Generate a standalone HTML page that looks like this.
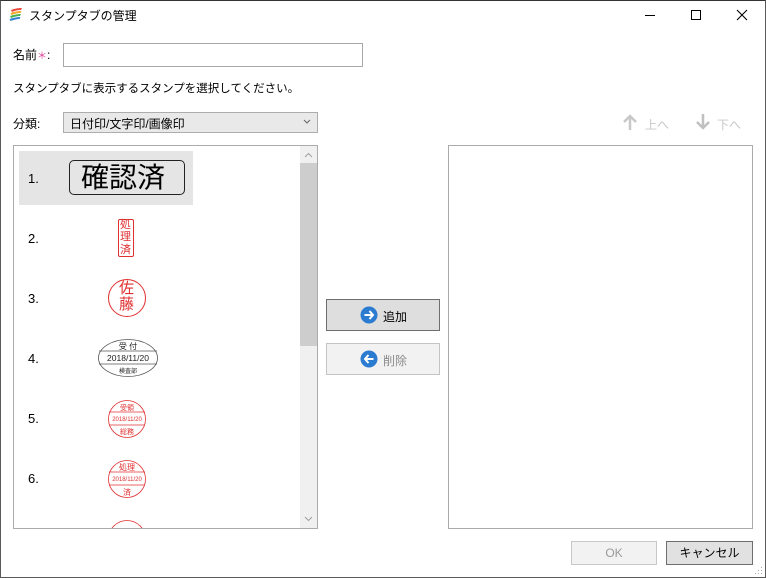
<!DOCTYPE html>
<html><head><meta charset="utf-8"><style>
*{margin:0;padding:0;box-sizing:border-box}
body{width:766px;height:578px;overflow:hidden;background:#fff;font-family:"Liberation Sans","Noto Sans CJK JP",sans-serif;font-size:12px;color:#000;position:relative}
.a{position:absolute}
.win{position:absolute;left:0;top:0;width:766px;height:578px;border:1px solid #5a5a5a;border-top-color:#333}
.t{white-space:nowrap}
</style></head><body>
<div class="win"></div>
<svg class="a" style="left:8px;top:7px" width="16" height="16" viewBox="0 0 16 16">
<path d="M3 3 Q8 1 14 1 L13 3 Q8 3 4 5Z" fill="#e8463a"/>
<path d="M2.5 6 Q8 4 13.5 4 L12.5 6 Q8 6 3.5 8Z" fill="#f5a623"/>
<path d="M2 9 Q8 7 13 7 L12 9 Q8 9 3 11Z" fill="#4caf50"/>
<path d="M1.5 12 Q8 10 12.5 10 L11.5 12 Q8 12 2.5 14Z" fill="#2f7fd3"/>
</svg>
<div class="a t" style="left:29px;top:7px;font-size:12px">スタンプタブの管理</div>
<div class="a" style="left:645px;top:15px;width:10px;height:1px;background:#000"></div>
<div class="a" style="left:691px;top:10px;width:10px;height:10px;border:1px solid #000"></div>
<svg class="a" style="left:736px;top:9px" width="12" height="12"><path d="M1 1L11 11M11 1L1 11" stroke="#000" stroke-width="1.1"/></svg>

<div class="a t" style="left:13px;top:46px">名前<span style="color:#e0409a;font-size:10px">＊</span>:</div>
<div class="a" style="left:63px;top:43px;width:300px;height:24px;border:1px solid #a8a8a8"></div>
<div class="a t" style="left:13px;top:80px;font-size:11.5px">スタンプタブに表示するスタンプを選択してください。</div>
<div class="a t" style="left:13px;top:115px">分類:</div>
<div class="a" style="left:63px;top:112px;width:255px;height:21px;border:1px solid #adadad;background:#e9e9e9"></div>
<div class="a t" style="left:70px;top:115px">日付印/文字印/画像印</div>
<svg class="a" style="left:303px;top:119px" width="8" height="6"><path d="M1 1L4 4L7 1" stroke="#666" fill="none"/></svg>

<svg class="a" style="left:622px;top:114px" width="16" height="17"><path d="M8 2V16M2 8L8 2L14 8" stroke="#c8c8c8" stroke-width="2.5" fill="none"/></svg>
<div class="a t" style="left:645px;top:116px;color:#c8c8c8">上へ</div>
<svg class="a" style="left:695px;top:113px" width="16" height="17"><path d="M8 1V15M2 9L8 15L14 9" stroke="#c0c0c0" stroke-width="2.5" fill="none"/></svg>
<div class="a t" style="left:717px;top:116px;color:#c8c8c8">下へ</div>

<!-- left list -->
<div class="a" style="left:13px;top:145px;width:305px;height:384px;border:1px solid #ababab;overflow:hidden">
  <div class="a" style="left:286px;top:0;width:17px;height:382px;background:#f0f0f0"></div>
  <svg class="a" style="left:290px;top:6px" width="9" height="6"><path d="M1 5L4.5 1.5L8 5" stroke="#a0a0a0" fill="none"/></svg>
  <svg class="a" style="left:290px;top:370px" width="9" height="6"><path d="M1 1L4.5 4.5L8 1" stroke="#a0a0a0" fill="none"/></svg>
  <div class="a" style="left:286px;top:17px;width:17px;height:183px;background:#cdcdcd"></div>
  <div class="a" style="left:5px;top:5px;width:174px;height:54px;background:#e5e5e5"></div>
</div>
<div class="a t" style="left:28px;top:171px;font-size:13px">1.</div>
<div class="a t" style="left:28px;top:231px;font-size:13px">2.</div>
<div class="a t" style="left:28px;top:291px;font-size:13px">3.</div>
<div class="a t" style="left:28px;top:351px;font-size:13px">4.</div>
<div class="a t" style="left:28px;top:411px;font-size:13px">5.</div>
<div class="a t" style="left:28px;top:471px;font-size:13px">6.</div>
<div class="a" style="left:69px;top:160px;width:116px;height:35px;border:1px solid #222;border-radius:5px"></div>
<div class="a t" style="left:81px;top:160px;font-size:28px;line-height:36px">確認済</div>
<div class="a" style="left:118px;top:219px;width:16px;height:38px;border:1px solid #e03030;border-radius:2px"></div>
<div class="a" style="left:120px;top:219px;width:12px;font-size:11px;line-height:12.3px;color:#e03030">処理済</div>
<div class="a" style="left:108px;top:279px;width:38px;height:38px;border:1px solid #e03030;border-radius:50%"></div>
<div class="a" style="left:119px;top:281px;width:16px;font-size:15px;line-height:16px;color:#e03030">佐藤</div>
<svg class="a" style="left:97px;top:338px" width="62" height="40" viewBox="0 0 62 40">
<ellipse cx="31" cy="20" rx="29.5" ry="18.5" fill="none" stroke="#555" stroke-width="0.8"/>
<line x1="2" y1="13" x2="60" y2="13" stroke="#555" stroke-width="0.8"/><line x1="2" y1="26" x2="60" y2="26" stroke="#555" stroke-width="0.8"/>
<text x="31" y="11" font-size="8" text-anchor="middle" fill="#222">受 付</text>
<text x="31" y="23" font-size="8.5" text-anchor="middle" fill="#222">2018/11/20</text>
<text x="31" y="35" font-size="6" text-anchor="middle" fill="#222">検査部</text>
</svg>
<svg class="a" style="left:107px;top:399px" width="40" height="40" viewBox="0 0 40 40">
<circle cx="20" cy="20" r="18.5" fill="none" stroke="#e03030" stroke-width="0.8"/>
<line x1="2" y1="13" x2="38" y2="13" stroke="#e03030" stroke-width="0.8"/><line x1="2" y1="26" x2="38" y2="26" stroke="#e03030" stroke-width="0.8"/>
<text x="20" y="11" font-size="7" text-anchor="middle" fill="#e03030">受領</text>
<text x="20" y="22" font-size="6" text-anchor="middle" fill="#e03030">2018/11/20</text>
<text x="20" y="35" font-size="7" text-anchor="middle" fill="#e03030">総務</text>
</svg>
<svg class="a" style="left:107px;top:459px" width="40" height="40" viewBox="0 0 40 40">
<circle cx="20" cy="20" r="18.5" fill="none" stroke="#e03030" stroke-width="0.8"/>
<line x1="2" y1="13" x2="38" y2="13" stroke="#e03030" stroke-width="0.8"/><line x1="2" y1="26" x2="38" y2="26" stroke="#e03030" stroke-width="0.8"/>
<text x="20" y="11" font-size="8" text-anchor="middle" fill="#e03030">処理</text>
<text x="20" y="22" font-size="6" text-anchor="middle" fill="#e03030">2018/11/20</text>
<text x="20" y="36" font-size="8" text-anchor="middle" fill="#e03030">済</text>
</svg>
<svg class="a" style="left:107px;top:518px" width="40" height="10" viewBox="0 0 40 10">
<circle cx="20" cy="21" r="18.5" fill="none" stroke="#e03030" stroke-width="0.8"/>
</svg>

<!-- buttons -->
<div class="a" style="left:326px;top:299px;width:114px;height:32px;border:1px solid #6e6e6e;background:#dedede"></div>
<svg class="a" style="left:360px;top:306px" width="18" height="18"><circle cx="9" cy="9" r="8.5" fill="#2b7bd0"/><path d="M4.5 9H13M9.5 5L13 9L9.5 13" stroke="#fff" stroke-width="2" fill="none"/></svg>
<div class="a t" style="left:383px;top:308px">追加</div>
<div class="a" style="left:326px;top:343px;width:114px;height:32px;border:1px solid #c4c4c4;background:#f2f2f2"></div>
<svg class="a" style="left:360px;top:350px" width="18" height="18"><circle cx="9" cy="9" r="8.5" fill="#2b7bd0"/><path d="M13.5 9H5M8.5 5L5 9L8.5 13" stroke="#fff" stroke-width="2" fill="none"/></svg>
<div class="a t" style="left:383px;top:352px;color:#8a8a8a">削除</div>

<div class="a" style="left:448px;top:145px;width:305px;height:384px;border:1px solid #ababab"></div>

<div class="a" style="left:571px;top:541px;width:86px;height:24px;border:1px solid #c8c8c8;background:#f2f2f2;text-align:center;line-height:22px;color:#9a9a9a">OK</div>
<div class="a" style="left:666px;top:541px;width:87px;height:24px;border:1px solid #6e6e6e;background:#e1e1e1;text-align:center;line-height:22px">キャンセル</div>
<svg class="a" style="left:754px;top:566px" width="10" height="10"><g fill="#aaa"><rect x="7" y="1" width="1" height="1"/><rect x="7" y="4" width="1" height="1"/><rect x="4" y="4" width="1" height="1"/><rect x="7" y="7" width="1" height="1"/><rect x="4" y="7" width="1" height="1"/><rect x="1" y="7" width="1" height="1"/></g></svg>
</body></html>
